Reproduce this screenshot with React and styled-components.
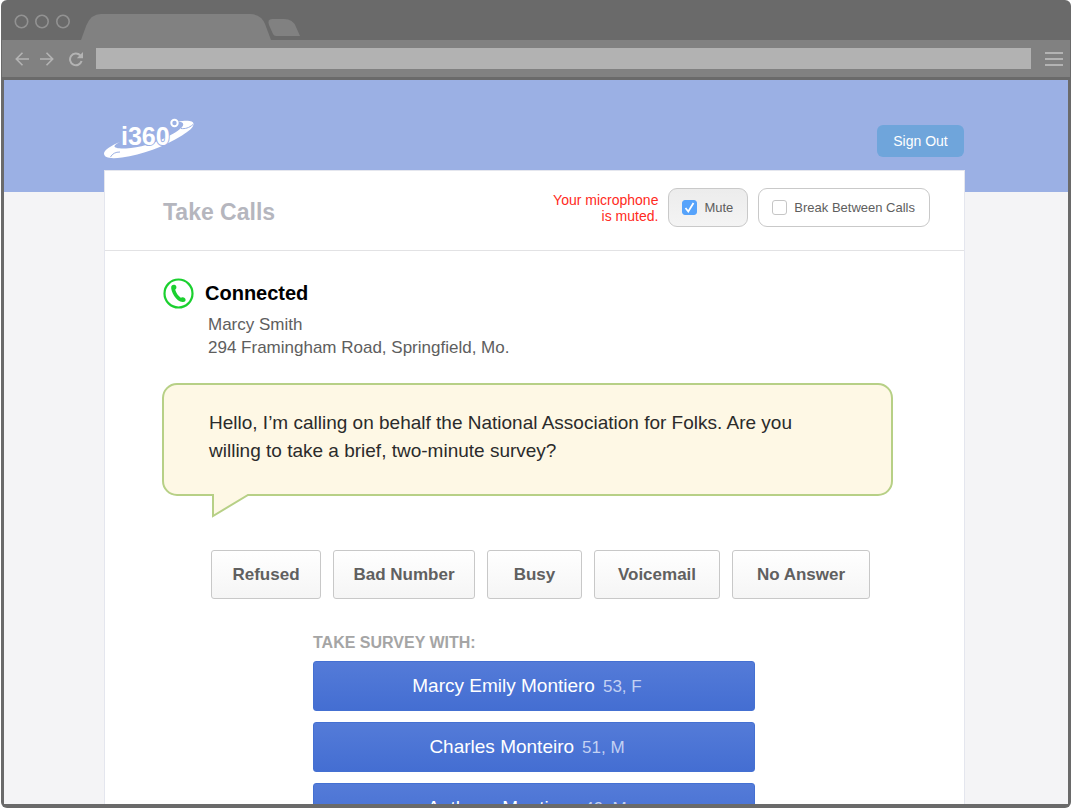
import React from "react";
import styled, { createGlobalStyle, css } from "styled-components";

const GlobalStyle = createGlobalStyle`
  *, *::before, *::after { box-sizing: border-box; }
  body {
    margin: 0;
    background: #fff;
    font-family: "Liberation Sans", Arial, sans-serif;
    color: #5e5e5e;
  }
  button, input { font-family: inherit; }
  button { cursor: pointer; }
  h1, h2, h3, p { margin: 0; }
`;

/* Browser frame */
const Frame = styled.div`
  display: flex;
  flex-direction: column;
  height: 100vh;
  margin: 0 1px;
  padding: 0 3px 4px;
  overflow: hidden;
  border-radius: 6px;
  background: #6a6a6a;
`;

const TitleBar = styled.div`
  display: flex;
  flex: none;
  align-items: flex-end;
  height: 40px;
  padding-left: 9px;
`;

const Lights = styled.svg`
  width: 58px;
  height: 16px;
  margin-bottom: 10px;
`;

const Tabs = styled.svg`
  width: 222px;
  height: 28px;
  margin-left: 10px;
`;

const Toolbar = styled.div`
  display: flex;
  flex: none;
  align-items: center;
  height: 40px;
  margin: 0 -2px;
  padding: 0 7px 0 13px;
  border-bottom: 3px solid #6a6a6a;
  background: #818181;
`;

const NavButton = styled.button`
  display: flex;
  width: 14px;
  height: 16px;
  margin-right: ${(p) => p.$gap}px;
  padding: 0;
  border: 0;
  background: none;
  color: #b3b3b3;
`;

const Address = styled.input`
  flex: 1;
  min-width: 0;
  height: 21px;
  padding: 0 8px;
  border: 0;
  outline: 0;
  background: #b2b2b2;
  font-size: 13px;
`;

const MenuButton = styled(NavButton)`
  width: 18px;
  margin: 0 0 0 14px;
`;

/* Page */
const Viewport = styled.div`
  flex: 1;
  min-height: 0;
  overflow: auto;
  scrollbar-width: none;
  padding: 0 103px 0 100px;
  background: linear-gradient(#9bb0e4 112px, #f4f4f6 112px);
`;

const Header = styled.header`
  display: flex;
  align-items: center;
  justify-content: space-between;
  height: 90px;
  padding: 32px 1px 0 0;
`;

const HomeLink = styled.a`
  display: flex;
  margin-bottom: 4px;
  color: #fff;
`;

const LogoText = styled.text`
  fill: #fff;
  stroke: #9bb0e4;
  stroke-width: 2px;
  paint-order: stroke;
  font-family: "Liberation Sans", Arial, sans-serif;
  font-size: 25px;
  font-weight: 700;
`;

const SignOut = styled.button`
  width: 87px;
  height: 32px;
  padding: 0;
  border: 0;
  border-radius: 6px;
  background: #6fa5db;
  color: #fff;
  font-size: 14px;
`;

const Card = styled.main`
  border: 1px solid #e4e6ee;
  background: #fff;
`;

const CardHeader = styled.div`
  display: flex;
  align-items: center;
  gap: 10px;
  height: 80px;
  padding: 0 34px 6px 58px;
  border-bottom: 1px solid #e2e2e4;
`;

const Title = styled.h1`
  flex: 1;
  padding-top: 9px;
  color: #b5b6be;
  font-size: 23px;
  line-height: 28px;
`;

const Warning = styled.p`
  color: #ff2a22;
  font-size: 14px;
  line-height: 16px;
  text-align: right;
`;

const Toggle = styled.label`
  display: flex;
  align-items: center;
  gap: 7px;
  height: 39px;
  padding: 0 14px 0 13px;
  border: 1px solid #c9c9c9;
  border-radius: 9px;
  background: #fff;
  font-size: 13px;
  white-space: nowrap;
  cursor: pointer;
  ${(p) =>
    p.$active &&
    css`
      background: linear-gradient(#ececec, #f4f4f4);
    `}
`;

const ToggleBox = styled.span`
  display: grid;
  width: 15px;
  height: 15px;
  > * {
    grid-area: 1 / 1;
  }
  svg {
    width: 15px;
    height: 15px;
    pointer-events: none;
  }
`;

const Checkbox = styled.input`
  appearance: none;
  width: 15px;
  height: 15px;
  margin: 0;
  border: 1px solid #c6c6c6;
  border-radius: 3px;
  background: #fff;
  &:checked {
    border-color: #56a3fb;
    background: #56a3fb;
  }
  &:not(:checked) + svg {
    display: none;
  }
`;

const CardBody = styled.div`
  padding: 26px 71px 40px 57px;
`;

const Status = styled.div`
  display: flex;
  align-items: center;
  gap: 11px;
  padding-left: 1px;
  color: #000;
`;

const StatusTitle = styled.h2`
  font-size: 20px;
  line-height: 32px;
`;

const Contact = styled.p`
  margin: 4px 0 24px;
  padding-left: 46px;
  font-size: 17px;
  line-height: 23px;
`;

const Bubble = styled.div`
  position: relative;
  padding: 24px 45px 29px;
  border: 2px solid #b7d086;
  border-radius: 15px;
  background: #fef8e5;
  color: #2b2b2b;
  font-size: 19px;
  line-height: 28px;
`;

const BubbleTail = styled.svg`
  position: absolute;
  top: 100%;
  left: 47px;
  width: 40px;
  height: 26px;
  margin-top: -1px;
`;

const Outcomes = styled.div`
  display: flex;
  gap: 12px;
  margin-top: 54px;
  padding-left: 49px;
`;

const OutcomeButton = styled.button`
  flex: 0 1 ${(p) => p.$width}px;
  height: 49px;
  padding: 0;
  border: 1px solid #c8c8c8;
  border-radius: 3px;
  background: linear-gradient(#fff, #f5f5f5);
  color: #606060;
  font-size: 17px;
  font-weight: 700;
`;

const Survey = styled.section`
  display: flex;
  flex-direction: column;
  gap: 11px;
  max-width: 442px;
  margin: 33px auto 0 151px;
`;

const SurveyTitle = styled.h3`
  margin-bottom: -3px;
  color: #a5a5a5;
  font-size: 16px;
  line-height: 21px;
`;

const PersonButton = styled.button`
  height: 50px;
  padding: 0 14px 0 0;
  border: 1px solid #4470d2;
  border-radius: 3px;
  background: linear-gradient(#547bd8, #446ed2);
  color: #fff;
  font-size: 19px;
`;

const PersonDetail = styled.span`
  margin-left: 8px;
  color: #c3d1f3;
  font-size: 17px;
`;

const BackIcon = () => (
  <svg width="14" height="16" fill="none" stroke="currentColor" strokeWidth="1.6">
    <path d="M14 8H1.5M7.500 1.800 1.300 8l6.200 6.200" />
  </svg>
);

const ForwardIcon = () => (
  <svg width="14" height="16" fill="none" stroke="currentColor" strokeWidth="1.6">
    <path d="M0 8h12.500M6.500 1.800 12.700 8l-6.200 6.200" />
  </svg>
);

const ReloadIcon = () => (
  <svg width="14" height="16" fill="none" stroke="currentColor" strokeWidth="2">
    <path d="M11.200 4.200A5.900 5.900 0 1 0 12.600 10" />
    <path d="M14 1v6.200H7.800z" fill="currentColor" stroke="none" />
  </svg>
);

const MenuIcon = () => (
  <svg width="18" height="16" stroke="currentColor" strokeWidth="2">
    <path d="M0 2h18M0 8h18M0 14h18" />
  </svg>
);

const PhoneIcon = () => (
  <svg width="31" height="31" viewBox="0 0 31 31" aria-hidden="true">
    <circle cx="15.500" cy="15.500" r="14" fill="#fff" stroke="#1bd02f" strokeWidth="2.200" />
    <path
      d="M8.200 8.800C8.500 7.200 10 6.400 11.500 6.800c1.700.5 2.400 2.300 1.700 3.700l-1 1.200c1 3.300 2.800 6 5.600 8l1.600-.4c1.600-.2 3.100 1.100 3.200 2.500.1 1.500-1.300 2.400-3 2.200-3.300-.3-6.200-2.500-8.400-6C9.200 14.800 7.900 11.200 8.200 8.800z"
      fill="#1bd02f"
    />
  </svg>
);

const Logo = () => (
  <svg width="90" height="42" viewBox="0 0 90 42" fill="none" aria-hidden="true">
    <path
      d="M17 23.500C7 27.500 0 32 0 35.500c0 4.500 7 5.500 18 4 20-2.500 42-11 60-22 7-4.500 11.500-8 11.500-11.500 0-3-5-4-15.500-2.500 4 .5 6 1.500 5 4-1.500 3-7 7-16 11.500-12 6-28 11-41 11.500-8 .3-12-.8-11.500-2.500C11 26.500 13 25.500 17 23.500z"
      fill="#fff"
    />
    <path d="M6.500 39c2-3.500 5-5 9.500-5M77 10.500c4 .5 8-.5 12-4" stroke="#9bb0e4" />
    <LogoText x="17" y="27">i360</LogoText>
    <circle cx="70.500" cy="5" r="3.200" fill="#9bb0e4" stroke="#fff" strokeWidth="2" />
  </svg>
);

const outcomes = [
  { label: "Refused", width: 110 },
  { label: "Bad Number", width: 142 },
  { label: "Busy", width: 95 },
  { label: "Voicemail", width: 126 },
  { label: "No Answer", width: 138 },
];

const people = [
  { name: "Marcy Emily Montiero", detail: "53, F" },
  { name: "Charles Monteiro", detail: "51, M" },
  { name: "Anthony Montiero", detail: "49, M" },
];

function CheckToggle({ label, checked }) {
  const [on, setOn] = React.useState(checked);
  return (
    <Toggle $active={on}>
      <ToggleBox>
        <Checkbox type="checkbox" checked={on} onChange={(e) => setOn(e.target.checked)} />
        <svg viewBox="0 0 15 15" fill="none" stroke="#fff" strokeWidth="1.800">
          <path d="M3.500 8l2.800 3.500L11.500 3" />
        </svg>
      </ToggleBox>
      {label}
    </Toggle>
  );
}

export default function App() {
  return (
    <>
      <GlobalStyle />
      <Frame>
        <TitleBar>
          <Lights fill="none" stroke="#929292" strokeWidth="1.600" aria-hidden="true">
            <circle cx="8.500" cy="7.500" r="6.200" />
            <circle cx="29" cy="7.500" r="6.200" />
            <circle cx="50" cy="7.500" r="6.200" />
          </Lights>
          <Tabs fill="#818181" aria-hidden="true">
            <path d="M0 28 5.500 13Q10 2 20 2H169q11 0 15 10l6 16z" />
            <path d="M191 7h12q9 0 12 8l4 9H195q-2 0-3-2l-4-9q-2-6 3-6z" />
          </Tabs>
        </TitleBar>
        <Toolbar>
          <NavButton $gap={11} aria-label="Back"><BackIcon /></NavButton>
          <NavButton $gap={15} aria-label="Forward"><ForwardIcon /></NavButton>
          <NavButton $gap={13} aria-label="Reload"><ReloadIcon /></NavButton>
          <Address type="text" aria-label="Address" />
          <MenuButton aria-label="Menu"><MenuIcon /></MenuButton>
        </Toolbar>
        <Viewport>
          <Header>
            <HomeLink href="#" aria-label="i360"><Logo /></HomeLink>
            <SignOut>Sign Out</SignOut>
          </Header>
          <Card>
            <CardHeader>
              <Title>Take Calls</Title>
              <Warning>
                Your microphone
                <br />
                is muted.
              </Warning>
              <CheckToggle label="Mute" checked />
              <CheckToggle label="Break Between Calls" checked={false} />
            </CardHeader>
            <CardBody>
              <Status>
                <PhoneIcon />
                <StatusTitle>Connected</StatusTitle>
              </Status>
              <Contact>
                Marcy Smith
                <br />
                294 Framingham Road, Springfield, Mo.
              </Contact>
              <Bubble>
                <p>
                  Hello, I’m calling on behalf the National Association for Folks. Are you willing to
                  take a brief, two-minute survey?
                </p>
                <BubbleTail viewBox="0 0 40 26" aria-hidden="true">
                  <path d="M2 0V23L38 1V0z" fill="#fef8e5" />
                  <path d="M0 2H2V23L37 2H40" fill="none" stroke="#b7d086" strokeWidth="2" />
                </BubbleTail>
              </Bubble>
              <Outcomes>
                {outcomes.map((o) => (
                  <OutcomeButton key={o.label} $width={o.width}>{o.label}</OutcomeButton>
                ))}
              </Outcomes>
              <Survey>
                <SurveyTitle>TAKE SURVEY WITH:</SurveyTitle>
                {people.map((p) => (
                  <PersonButton key={p.name}>
                    {p.name}
                    <PersonDetail>{p.detail}</PersonDetail>
                  </PersonButton>
                ))}
              </Survey>
            </CardBody>
          </Card>
        </Viewport>
      </Frame>
    </>
  );
}
